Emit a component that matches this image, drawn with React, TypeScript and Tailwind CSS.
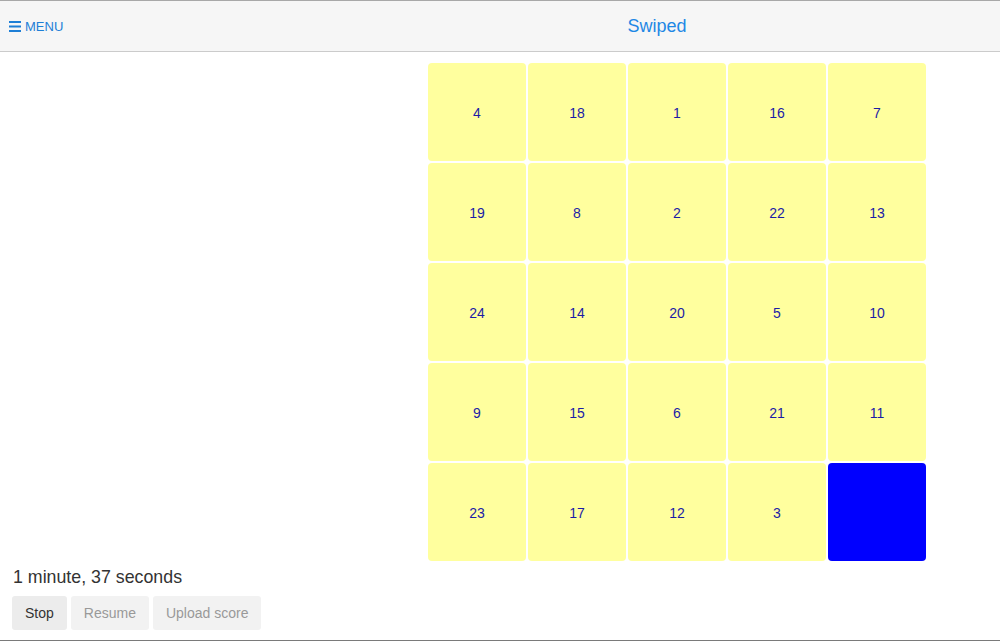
const tiles = [4, 18, 1, 16, 7, 19, 8, 2, 22, 13, 24, 14, 20, 5, 10, 9, 15, 6, 21, 11, 23, 17, 12, 3, 0];

export default function App() {
  return (
    <div className="h-[641px] flex flex-col bg-white border-t border-[#a8a8a8] border-b border-b-[#7a7a7a] font-['Liberation_Sans',Arial,sans-serif]">
      <header className="h-[51px] flex items-center bg-[#f6f6f6] border-b border-[#cbcbcb]">
        <div className="w-[314px] pl-[9px] pt-[2px] flex items-center gap-[4px] text-[#1e7fd6] text-[13px]">
          <svg width="12" height="11" viewBox="0 0 12 11" className="mt-[-1px]">
            <rect x="0" y="0" width="12" height="2" fill="#1e7fd6" />
            <rect x="0" y="4.5" width="12" height="2" fill="#1e7fd6" />
            <rect x="0" y="9" width="12" height="2" fill="#1e7fd6" />
          </svg>
          <span>MENU</span>
        </div>
        <div className="flex-1 text-center text-[18px] text-[#1e88e5] pt-[1px]">Swiped</div>
      </header>

      <main className="flex-1 flex flex-col">
        <div className="flex justify-end pr-[74px] pt-[11px]">
          <div className="grid grid-cols-5 gap-[2px] w-[498px]">
            {tiles.map((n) =>
              n === 0 ? (
                <div key={n} className="h-[98px] rounded-[4px] bg-[#0000ff]" />
              ) : (
                <div
                  key={n}
                  className="h-[98px] pt-[2px] rounded-[4px] bg-[#ffff9e] flex items-center justify-center text-[14px] text-[#1c1ca6]"
                >
                  {n}
                </div>
              )
            )}
          </div>
        </div>

        <div className="px-[13px] mt-[6px] text-[17.8px] leading-[21px] text-[#333]">1 minute, 37 seconds</div>
        <div className="flex gap-[4px] px-[12px] mt-[8px]">
          <button className="h-[34px] px-[13px] rounded-[3px] bg-[#ececec] text-[14px] text-[#333]">Stop</button>
          <button className="h-[34px] px-[13px] rounded-[3px] bg-[#f2f2f2] text-[14px] text-[#999]">Resume</button>
          <button className="h-[34px] px-[13px] rounded-[3px] bg-[#f2f2f2] text-[14px] text-[#999]">Upload score</button>
        </div>
      </main>
    </div>
  );
}
